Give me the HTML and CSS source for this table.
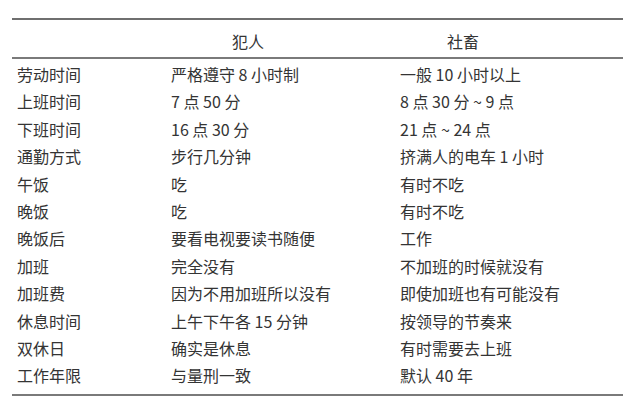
FILE: index.html
```html
<!DOCTYPE html>
<html lang="zh">
<head>
<meta charset="utf-8">
<link rel="stylesheet" href="styles.css">
</head>
<body>
<div class="table">
  <div class="head">
    <div></div>
    <div class="h2">犯人</div>
    <div class="h3">社畜</div>
  </div>
  <div class="body">
    <div class="row"><div>劳动时间</div><div>严格遵守 8 小时制</div><div>一般 10 小时以上</div></div>
    <div class="row"><div>上班时间</div><div>7 点 50 分</div><div>8 点 30 分 ~ 9 点</div></div>
    <div class="row"><div>下班时间</div><div>16 点 30 分</div><div>21 点 ~ 24 点</div></div>
    <div class="row"><div>通勤方式</div><div>步行几分钟</div><div>挤满人的电车 1 小时</div></div>
    <div class="row"><div>午饭</div><div>吃</div><div>有时不吃</div></div>
    <div class="row"><div>晚饭</div><div>吃</div><div>有时不吃</div></div>
    <div class="row"><div>晚饭后</div><div>要看电视要读书随便</div><div>工作</div></div>
    <div class="row"><div>加班</div><div>完全没有</div><div>不加班的时候就没有</div></div>
    <div class="row"><div>加班费</div><div>因为不用加班所以没有</div><div>即使加班也有可能没有</div></div>
    <div class="row"><div>休息时间</div><div>上午下午各 15 分钟</div><div>按领导的节奏来</div></div>
    <div class="row"><div>双休日</div><div>确实是休息</div><div>有时需要去上班</div></div>
    <div class="row"><div>工作年限</div><div>与量刑一致</div><div>默认 40 年</div></div>
  </div>
</div>
</body>
</html>
```
FILE: styles.css
```css
html, body {
  margin: 0;
  padding: 0;
  background: #ffffff;
}
body {
  font-family: "Noto Sans CJK SC", "Noto Sans", sans-serif;
  font-size: 16px;
  color: #343434;
}
.table {
  margin: 18px 0 0 12px;
  width: 611px;
  border-top: 2px solid #6f6f6f;
  border-bottom: 2px solid #7a7a7a;
}
.head {
  display: grid;
  grid-template-columns: 154px 229px 1fr;
  height: 39px;
  align-items: center;
  border-bottom: 2px solid #7a7a7a;
  line-height: 20px;
  padding-top: 4px;
  box-sizing: border-box;
}
.h2 { padding-left: 66px; }
.h3 { padding-left: 52px; }
.body {
  padding: 2px 0 4px;
}
.row {
  display: grid;
  grid-template-columns: 154px 229px 1fr;
  height: 27.4px;
  line-height: 27.4px;
  white-space: nowrap;
}
.row > div {
  padding-left: 5px;
}
```
